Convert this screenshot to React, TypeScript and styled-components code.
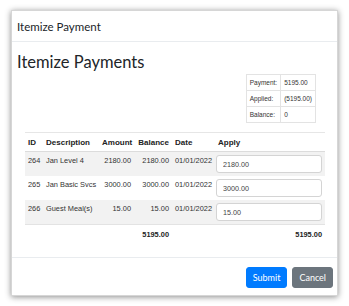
import React from 'react'
import styled, { createGlobalStyle } from 'styled-components'

const GlobalStyle = createGlobalStyle`
  html, body {
    margin: 0;
    padding: 0;
    background: #ffffff;
  }
  body {
    font-family: "Liberation Sans", Arial, sans-serif;
    color: #212529;
  }
`

const Page = styled.div`
  width: 349px;
  height: 306px;
  padding: 10px 11px 0 11px;
  box-sizing: border-box;
`

const Modal = styled.div`
  width: 327px;
  height: 286px;
  box-sizing: border-box;
  background: #fff;
  border: 1px solid #d6d6d6;
  box-shadow: 0 1px 6px rgba(0, 0, 0, 0.45);
  display: flex;
  flex-direction: column;
`

const Header = styled.div`
  height: 31px;
  box-sizing: border-box;
  padding: 0 5px;
  display: flex;
  align-items: center;
  border-bottom: 1px solid #e9ecef;
  font-family: Lato, "Noto Sans", sans-serif;
  font-size: 11.5px;
  color: #212529;
`

const Body = styled.div`
  flex: 1;
  padding: 9px 13px 0 5px;
  display: flex;
  flex-direction: column;
`

const Title = styled.h1`
  margin: 0;
  font-family: Lato, "Noto Sans", sans-serif;
  font-weight: 400;
  font-size: 16.5px;
  line-height: 22px;
  color: #212529;
`

const SummaryWrap = styled.div`
  display: flex;
  justify-content: flex-end;
  padding-right: 8px;
  margin-top: 1px;
`

const Summary = styled.table`
  border-collapse: collapse;
  font-size: 6.5px;
  color: #333;
  td {
    border: 1px solid #e3e3e3;
    height: 15px;
    padding: 0 3px;
  }
`

const Grid = styled.table`
  margin: 9px 0 0 8px;
  width: 300px;
  table-layout: fixed;
  border-collapse: collapse;
  font-size: 7.4px;
  color: #333;
  th {
    font-weight: 700;
    font-size: 8px;
    color: #222;
    text-align: left;
    height: 18px;
    padding: 0 3px;
    border-top: 1px solid #e6e6e6;
    border-bottom: 1px solid #dcdcdc;
  }
`

const Row = styled.tr<{ $shade: boolean }>`
  background: ${p => (p.$shade ? '#f2f2f2' : '#ffffff')};
  td {
    vertical-align: top;
    padding: 4px 3px 3px 3px;
    height: 17px;
  }
`

const Cell = styled.td<{ $right?: boolean; $bold?: boolean }>`
  text-align: ${p => (p.$right ? 'right' : 'left')};
  font-weight: ${p => (p.$bold ? 700 : 400)};
  white-space: nowrap;
`

const HeadCell = styled.th<{ $right?: boolean }>`
  text-align: ${p => (p.$right ? 'right' : 'left')} !important;
`

const TotalRow = styled.tr`
  td {
    padding: 5px 3px;
    border-top: 1px solid #e3e3e3;
    font-size: 7.4px;
    color: #222;
  }
`

const ApplyInput = styled.input`
  display: block;
  box-sizing: border-box;
  width: 106px;
  height: 18px;
  margin: -1px 0 0 -2px;
  padding: 0 6px;
  border: 1px solid #d4d4d4;
  border-radius: 3px;
  background: #fff;
  font-family: "Liberation Sans", Arial, sans-serif;
  font-size: 7.2px;
  color: #444;
`

const Footer = styled.div`
  height: 38px;
  box-sizing: border-box;
  border-top: 1px solid #e9ecef;
  display: flex;
  justify-content: flex-end;
  align-items: center;
  gap: 5px;
  padding: 2px 4px 0 0;
`

const Button = styled.button<{ $variant: 'primary' | 'secondary' }>`
  height: 21px;
  padding: 0 6px;
  border: 1px solid ${p => (p.$variant === 'primary' ? '#007bff' : '#6c757d')};
  background: ${p => (p.$variant === 'primary' ? '#007bff' : '#6c757d')};
  color: #fff;
  border-radius: 3px;
  font-family: Lato, "Noto Sans", sans-serif;
  font-size: 9px;
`

const items = [
  { id: 264, desc: 'Jan Level 4', amount: '2180.00', balance: '2180.00', date: '01/01/2022' },
  { id: 265, desc: 'Jan Basic Svcs', amount: '3000.00', balance: '3000.00', date: '01/01/2022' },
  { id: 266, desc: 'Guest Meal(s)', amount: '15.00', balance: '15.00', date: '01/01/2022' },
]

export default function App() {
  return (
    <>
      <GlobalStyle />
      <Page>
        <Modal>
          <Header>Itemize Payment</Header>
          <Body>
            <Title>Itemize Payments</Title>
            <SummaryWrap>
              <Summary>
                <tbody>
                  <tr><td>Payment:</td><td>5195.00</td></tr>
                  <tr><td>Applied:</td><td>(5195.00)</td></tr>
                  <tr><td>Balance:</td><td>0</td></tr>
                </tbody>
              </Summary>
            </SummaryWrap>
            <Grid>
              <colgroup>
                <col style={{ width: 18 }} />
                <col style={{ width: 56 }} />
                <col style={{ width: 35 }} />
                <col style={{ width: 38 }} />
                <col style={{ width: 43 }} />
                <col style={{ width: 110 }} />
              </colgroup>
              <thead>
                <tr>
                  <HeadCell>ID</HeadCell>
                  <HeadCell>Description</HeadCell>
                  <HeadCell $right>Amount</HeadCell>
                  <HeadCell $right>Balance</HeadCell>
                  <HeadCell>Date</HeadCell>
                  <HeadCell>Apply</HeadCell>
                </tr>
              </thead>
              <tbody>
                {items.map((it, i) => (
                  <Row key={it.id} $shade={i % 2 === 0}>
                    <Cell>{it.id}</Cell>
                    <Cell>{it.desc}</Cell>
                    <Cell $right>{it.amount}</Cell>
                    <Cell $right>{it.balance}</Cell>
                    <Cell>{it.date}</Cell>
                    <Cell><ApplyInput defaultValue={it.amount} /></Cell>
                  </Row>
                ))}
                <TotalRow>
                  <Cell />
                  <Cell />
                  <Cell />
                  <Cell $right $bold>5195.00</Cell>
                  <Cell />
                  <Cell $right $bold>5195.00</Cell>
                </TotalRow>
              </tbody>
            </Grid>
          </Body>
          <Footer>
            <Button $variant="primary">Submit</Button>
            <Button $variant="secondary">Cancel</Button>
          </Footer>
        </Modal>
      </Page>
    </>
  )
}
